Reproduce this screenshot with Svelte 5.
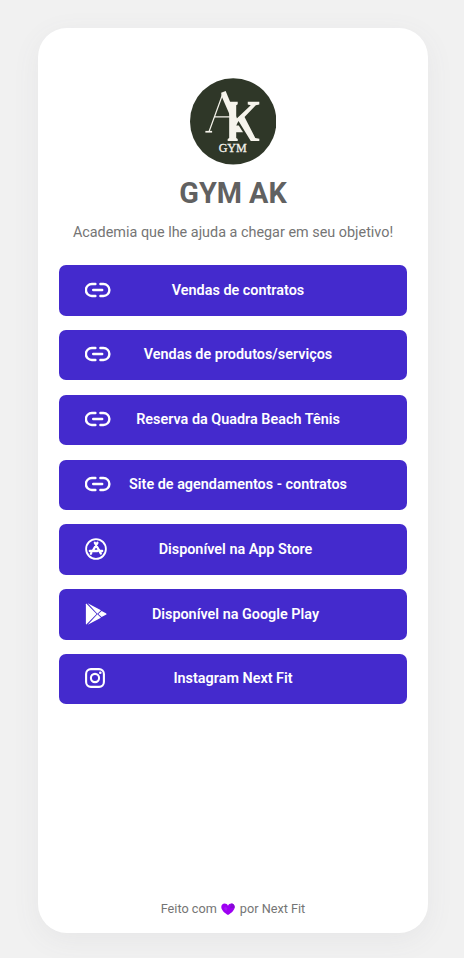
<script lang="ts">
  const links = [
    { icon: 'chain', label: 'Vendas de contratos' },
    { icon: 'chain', label: 'Vendas de produtos/serviços' },
    { icon: 'chain', label: 'Reserva da Quadra Beach Tênis' },
    { icon: 'chain', label: 'Site de agendamentos - contratos' },
    { icon: 'appstore', label: 'Disponível na App Store' },
    { icon: 'play', label: 'Disponível na Google Play' },
    { icon: 'instagram', label: 'Instagram Next Fit' },
  ];
</script>

<main class="page">
  <section class="card">
    <svg class="logo" viewBox="0 0 86 86" role="img" aria-label="AK">
      <circle cx="43" cy="43" r="43" fill="#2f3728" />
      <g fill="#f6f4ec">
        <path d="M31 14.5 L35.5 12.8 L48 43 L45 49 L31.5 18 Z" />
        <path d="M38 23.5 H47.5 V26 L46 27 V59.5 L47.5 60.5 V62.5 H37.5 V60.5 L39 59.5 V27 L38 26 Z" />
        <path d="M57.5 23.5 H69 V26.3 L65.5 27 L54.3 38.5 L65 59.5 L69 60.3 V62.5 H60.5 L48.3 42.5 L45.5 45 V41 L60.5 27 L57.5 26.3 Z" />
        <path d="M45.5 47 H48.5 L52.8 53.8 H45.5 Z" />
      </g>
      <path d="M32.5 16 L19 53 M24.5 38.5 H40" fill="none" stroke="#f6f4ec" stroke-width="1.2" />
      <path d="M15.3 53.3 H22" fill="none" stroke="#f6f4ec" stroke-width="1.7" />
      <text x="42.5" y="73.8" text-anchor="middle" textLength="28" lengthAdjust="spacingAndGlyphs">GYM</text>
    </svg>

    <h1>GYM AK</h1>
    <p class="description">Academia que lhe ajuda a chegar em seu objetivo!</p>

    <nav class="links">
      {#each links as link (link.label)}
        <button class="item">
          <span class="icon {link.icon}">
            {#if link.icon === 'chain'}
              <svg width="26" height="16" viewBox="0 0 26 16" fill="none" stroke="#fff" stroke-width="2.4" stroke-linecap="round">
                <path d="M10.4 2H6.9a5.7 5.7 0 0 0 0 12h3.5M15.4 2h3a5.7 5.7 0 0 1 0 12h-3M8.2 8h9" />
              </svg>
            {:else if link.icon === 'appstore'}
              <svg width="22" height="22" viewBox="0 0 22 22" fill="none" stroke="#fff" stroke-linecap="round">
                <circle cx="11" cy="11" r="9.9" stroke-width="1.8" />
                <path d="M12.4 4.8L7.6 13M9.8 4.8L15.8 15.5M4.8 13h7.7M15 13h2.2M6.3 15l-.4.7" stroke-width="2.3" />
              </svg>
            {:else if link.icon === 'play'}
              <svg width="22" height="22" viewBox="0 0 22 22" fill="#fff">
                <path d="M1.3.4L11.6 11 1.3 21.6Q.9 21.3.9 20.7V1.3Q.9.7 1.3.4z" />
                <path d="M2.7.2L16 7.3 12.4 10.8zM2.7 21.8L12.4 11.2 16 14.7z" />
                <path d="M16.6 7.9L20.9 10.2Q22.2 11 20.9 11.8L16.6 14.1 13.3 11z" />
              </svg>
            {:else}
              <svg width="20" height="20" viewBox="0 0 20 20" fill="none" stroke="#fff" stroke-width="2.1">
                <rect x="1.1" y="1.1" width="17.8" height="17.8" rx="4.8" />
                <circle cx="10" cy="10" r="4.1" />
                <circle cx="15.3" cy="4.7" r="1.3" fill="#fff" stroke="none" />
              </svg>
            {/if}
          </span>
          <span class="label">{link.label}</span>
        </button>
      {/each}
    </nav>

    <footer>
      <span>Feito com</span>
      <svg width="14" height="12" viewBox="0 0 14 12">
        <path d="M7 12C3.5 9.8.3 7 .3 3.9.3 1.9 1.8.6 3.6.6 5.2.6 6.4 1.4 7 2.7 7.6 1.4 8.8.6 10.4.6c1.8 0 3.3 1.3 3.3 3.3C13.7 7 10.5 9.8 7 12z" fill="#9d00f2" />
        <path d="M4 3.5L6.5 5l-1 3L3 6z" fill="#a812fa" />
        <path d="M10.4.6L9 5.3l4.6-.6C13.9 2.3 12.4.6 10.4.6z" fill="#8508d4" />
      </svg>
      <span>por Next Fit</span>
    </footer>
  </section>
</main>

<style>
  :global(body) {
    background: #f1f1f1;
  }

  .page {
    box-sizing: border-box;
    height: 958px;
    padding: 28px 36px 25px 38px;
    font-family: Roboto, sans-serif;
    overflow: hidden;
  }

  .card {
    box-sizing: border-box;
    display: flex;
    flex-direction: column;
    align-items: center;
    height: 905px;
    padding: 50px 21px 16px;
    border-radius: 29px;
    background: #fff;
    box-shadow: 0 7px 29px rgba(100, 100, 111, 0.07);
  }

  .logo {
    flex: none;
    width: 86.4px;
    height: 86.8px;
  }

  .logo text {
    fill: #f6f4ec;
    stroke: #f6f4ec;
    stroke-width: 0.3px;
    font-family: "Liberation Serif", serif;
    font-size: 13px;
  }

  h1 {
    margin: 10.2px 0 0;
    color: #616161;
    font-size: 28.8px;
    font-weight: 700;
    line-height: 36px;
  }

  .description {
    margin: 13px 0 0;
    color: #757575;
    font-size: 14.4px;
    line-height: 18px;
    white-space: nowrap;
  }

  .links {
    display: flex;
    flex-direction: column;
    gap: 14.4px;
    width: 100%;
    margin-top: 23.3px;
  }

  .item {
    display: flex;
    align-items: center;
    height: 50.4px;
    padding: 0 42px 0.7px 26px;
    border: 0;
    border-radius: 7px;
    background: #442acd;
    color: #fff;
    font-family: inherit;
    font-size: 14.4px;
    font-weight: 600;
    cursor: pointer;
  }

  .icon {
    display: flex;
    width: 26px;
    margin-bottom: 1px;
  }

  .icon.appstore,
  .icon.play {
    width: 21px;
    margin-bottom: 0;
  }

  .icon.instagram {
    width: 16px;
  }

  .icon svg {
    flex: none;
  }

  .label {
    flex: 1;
    text-align: center;
    white-space: nowrap;
  }

  footer {
    display: flex;
    align-items: center;
    gap: 4.5px;
    margin-top: auto;
    color: #757575;
    font-size: 12.7px;
    line-height: 16px;
  }
</style>
